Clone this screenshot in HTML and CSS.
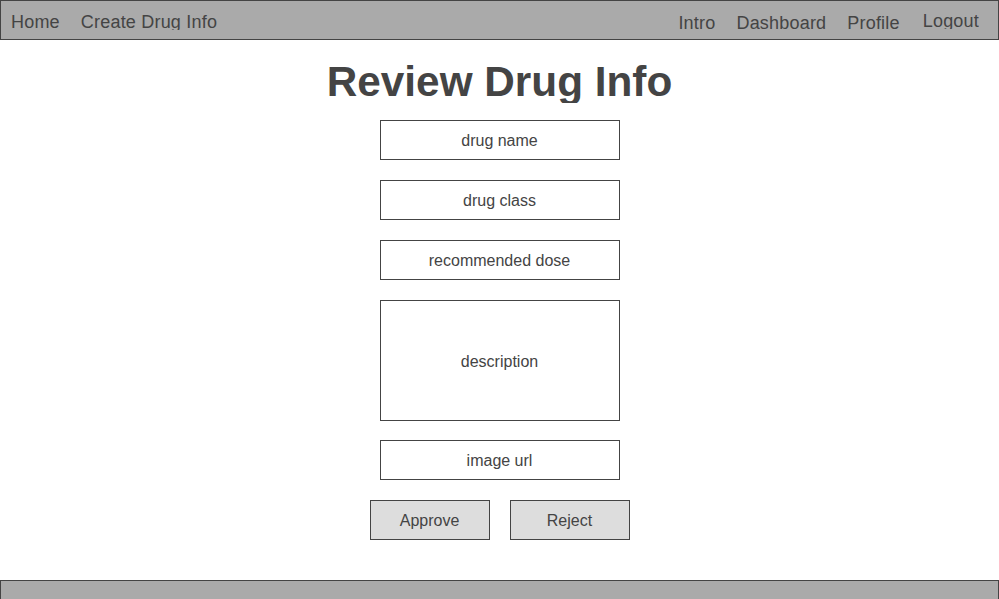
FILE: index.html
```html
<!DOCTYPE html>
<html>
<head>
<meta charset="utf-8">
<link rel="stylesheet" href="styles.css">
</head>
<body>
<nav class="nav">
  <div class="nav-left">
    <a class="nav-link">Home</a>
    <a class="nav-link">Create Drug Info</a>
  </div>
  <div class="nav-right">
    <a class="nav-link low">Intro</a>
    <a class="nav-link low">Dashboard</a>
    <a class="nav-link low">Profile</a>
    <a class="nav-link logout">Logout</a>
  </div>
</nav>
<main class="main">
  <h1 class="title">Review Drug Info</h1>
  <div class="field">drug name</div>
  <div class="field">drug class</div>
  <div class="field">recommended dose</div>
  <div class="field field-tall">description</div>
  <div class="field">image url</div>
  <div class="buttons">
    <button class="btn">Approve</button>
    <button class="btn">Reject</button>
  </div>
</main>
<footer class="footer"></footer>
</body>
</html>
```
FILE: styles.css
```css
html, body {
  margin: 0;
  padding: 0;
  background: #fff;
  color: #444;
  font-family: "Liberation Sans", Arial, sans-serif;
}
.nav {
  height: 38px;
  background: #aaa;
  border: 1px solid #444;
  display: flex;
  justify-content: space-between;
  align-items: flex-start;
  padding: 0 19px 0 10px;
}
.nav-left, .nav-right {
  display: flex;
  gap: 21px;
}
.nav-link {
  display: block;
  font-family: "Liberation Sans", Arial, sans-serif;
  font-size: 18px;
  letter-spacing: 0.2px;
  color: #444;
  line-height: 18px;
  height: 17px;
  margin-top: 12px;
  overflow: hidden;
}
.nav-link.low { margin-top: 13px; }
.nav-link.logout { margin-top: 11px; margin-left: 2px; }
.main {
  display: flex;
  flex-direction: column;
  align-items: center;
}
.title {
  margin: 20px 0 17px;
  font-size: 42.3px;
  font-weight: bold;
  color: #444;
  line-height: 44px;
  height: 43px;
  overflow: hidden;
}
.field {
  box-sizing: border-box;
  width: 240px;
  height: 40px;
  padding-top: 2px;
  border: 1px solid #444;
  display: flex;
  align-items: center;
  justify-content: center;
  font-size: 16px;
  margin-bottom: 20px;
}
.field-tall {
  height: 121px;
  margin-bottom: 19px;
}
.buttons {
  display: flex;
  gap: 20px;
}
.btn {
  box-sizing: border-box;
  width: 120px;
  height: 40px;
  padding: 2px 0 0;
  background: #ddd;
  border: 1px solid #444;
  color: #444;
  font-family: "Liberation Sans", Arial, sans-serif;
  font-size: 16px;
}
.footer {
  margin-top: 40px;
  height: 40px;
  background: #aaa;
  border: 1px solid #444;
}
```
